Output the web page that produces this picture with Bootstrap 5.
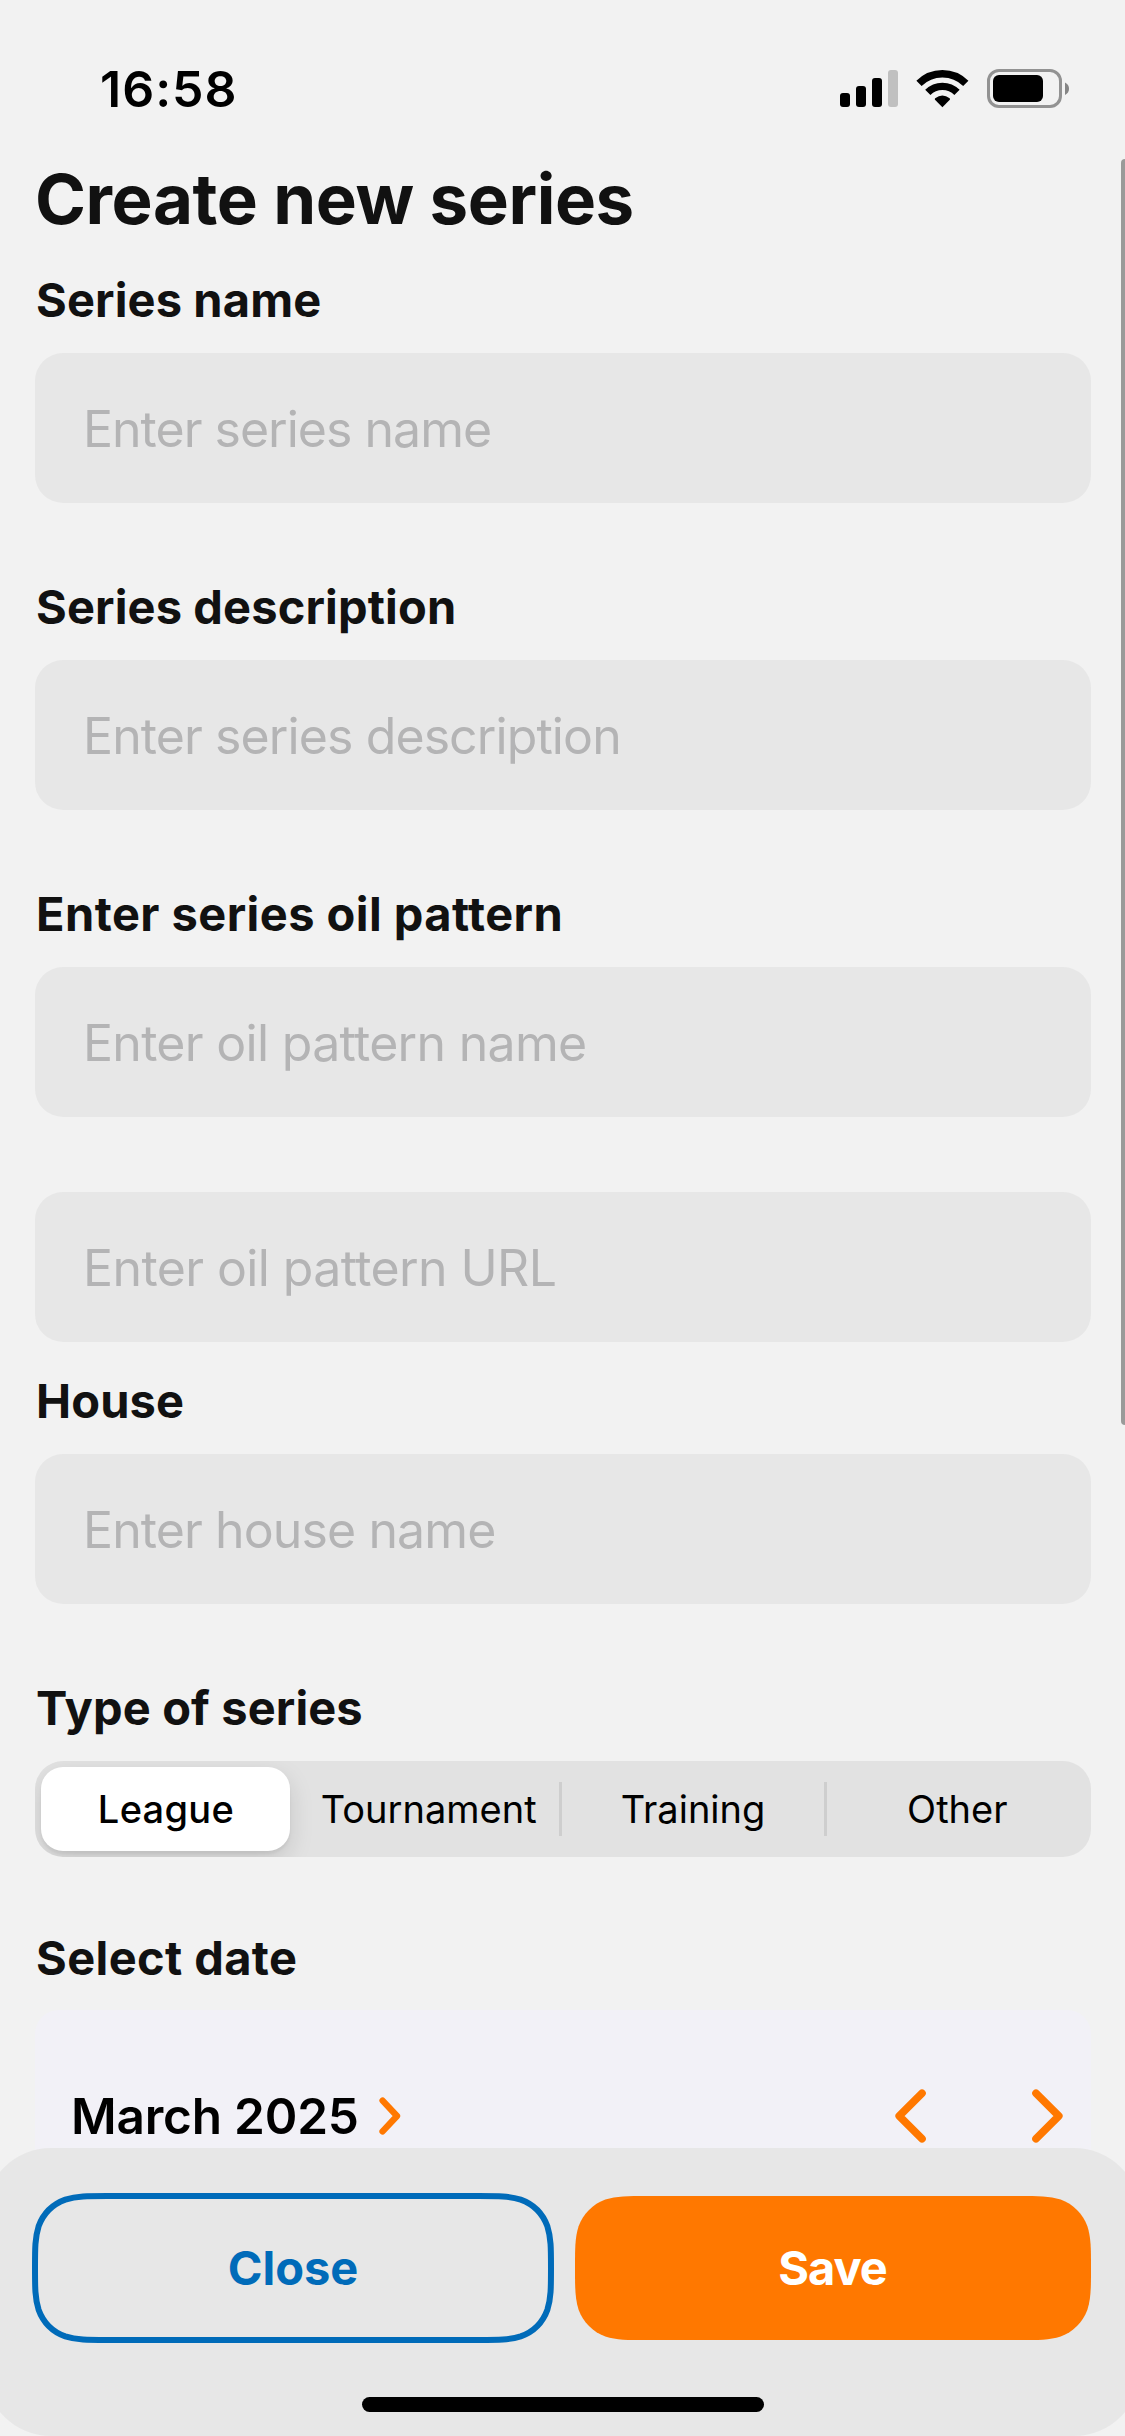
<!DOCTYPE html>
<html lang="en">
<head>
<meta charset="utf-8">
<meta name="viewport" content="width=device-width, initial-scale=1">
<title>Create new series</title>
<link href="https://cdn.jsdelivr.net/npm/bootstrap@5.3.0/dist/css/bootstrap.min.css" rel="stylesheet">
<style>
  body { font-family: Inter, "Liberation Sans", sans-serif; background: #f2f2f2; color: #111; }
  .screen { width: 1125px; height: 2436px; }
  .status-bar { height: 157px; padding: 0 56px 0 100px; color: #000; }
  .clock { font-size: 50px; line-height: 60px; letter-spacing: 1px; margin-top: 59px; }
  .status-icons { margin-top: 69px; width: 229px; height: 39px; }
  .form-area { padding: 0 34px 0 35px; }
  .page-title { font-size: 69px; line-height: 84px; letter-spacing: -.44px; margin-bottom: 30px; }
  .field-label { display: block; font-size: 47px; line-height: 58px; letter-spacing: .13px; margin: 0 0 24px; padding-left: 1px; }
  .label-wide { letter-spacing: .44px; }
  .label-date { letter-spacing: .38px; margin-bottom: 23px; }
  .field-input, .field-input:focus { height: 150px; border: 0; border-radius: 28px; background: #e7e7e7; font-size: 50px; line-height: 60px; padding: 2px 48px 0; }
  .field-input::placeholder { color: #b4b4b5; opacity: 1; }
  .ls-a { letter-spacing: -.99px; } .ls-e { letter-spacing: -.9px; } .ls-b { letter-spacing: -.7px; } .ls-c { letter-spacing: -.6px; } .ls-d { letter-spacing: -.9px; }
  .gap-field { margin-bottom: 75px; }
  .gap-tight { margin-bottom: 30px; }
  .segmented { height: 96px; border-radius: 28px; background: #e2e2e2; margin-bottom: 72px; overflow: hidden; }
  .segment { height: 54px; border: 0; border-right: 3px solid #cecece; border-radius: 0; background: none; padding: 0; font-size: 38px; line-height: 54px; color: #000; }
  .segment:last-child { border-right: 3px solid transparent; }
  .segment.chosen { flex: 0 0 249px; height: 84px; line-height: 84px; margin: 0 8px 0 6px; padding-left: 1px; border: 0; border-radius: 22px; background: #fff; box-shadow: 0 9px 24px rgba(0,0,0,.13), 0 3px 3px rgba(0,0,0,.05); letter-spacing: .3px; }
  .calendar { height: 400px; border-radius: 24px; background: #f2f1f7; padding: 74px 28px 0 36px; color: #000; }
  .month { font-size: 49.5px; line-height: 64px; letter-spacing: -.2px; }
  .month-arrow { margin-left: 20px; }
  .next-arrow { margin-left: 106px; }
  .chevron { fill: none; stroke: #ff7800; stroke-linecap: round; stroke-linejoin: round; }
  .scroll-thumb { right: 0; top: 159px; width: 4px; height: 1266px; border-radius: 4px 0 0 4px; background: #9a9a99; }
  .sheet { left: -15px; right: -15px; bottom: 0; height: 288px; border-radius: 66px; background: #e7e7e7; padding: 45px 46px 0 47px; }
  .action { position: relative; width: 522px; height: 150px; border: 0; padding: 0; font-size: 47px; line-height: 150px; background: none; }
  .action svg { position: absolute; left: 0; top: 0; }
  .action span { position: relative; }
  .act-close { color: #006bb9; }
  .act-save { color: #fff; letter-spacing: -1px; padding-right: 1px; }
  .home-bar { width: 402px; height: 15px; border-radius: 8px; background: #000; margin: 54px auto 0; }
</style>
</head>
<body>
<svg width="0" height="0" class="position-absolute">
  <symbol id="pill" overflow="visible">
    <path d="M72 0H444C463.75 0 474.32 0 485.69 3.6C498.1 8.11 507.89 17.9 512.4 30.31C516 41.68 516 52.25 516 72C516 91.75 516 102.32 512.4 113.69C507.89 126.1 498.1 135.89 485.69 140.4C474.32 144 463.75 144 444 144H72C52.25 144 41.68 144 30.31 140.4C17.9 135.89 8.11 126.1 3.6 113.69C0 102.32 0 91.75 0 72C0 52.25 0 41.68 3.6 30.31C8.11 17.9 17.9 8.11 30.31 3.6C41.68 0 52.25 0 72 0Z"/>
  </symbol>
</svg>

<div class="screen position-relative overflow-hidden">
  <header class="status-bar d-flex justify-content-between align-items-start">
    <span class="clock fw-semibold">16:58</span>
    <svg class="status-icons" viewBox="840 69 229 39">
      <rect x="840" y="93" width="10" height="14" rx="3"/>
      <rect x="856" y="86" width="10" height="21" rx="3"/>
      <rect x="872" y="78" width="10" height="29" rx="3"/>
      <rect x="888" y="70" width="10" height="37" rx="3" fill="#c0c0c0"/>
      <g fill="none" stroke="#000" stroke-width="7.4">
        <path d="M919 83.4A33.2 33.2 0 0 1 965.8 83.4"/>
        <path d="M927.8 92.4A20.6 20.6 0 0 1 957 92.4"/>
      </g>
      <path d="M942.4 107.2L935 99.8Q934.4 99 935.2 98.2Q942.4 92.6 949.6 98.2Q950.4 99 949.8 99.8Z"/>
      <rect x="988.5" y="70.5" width="72" height="36" rx="10.5" fill="none" stroke="#929292" stroke-width="3"/>
      <rect x="993" y="75" width="50" height="27" rx="6"/>
      <path d="M1065 82.5Q1069 84.5 1069 88.7T1065 95Z" fill="#858585"/>
    </svg>
  </header>

  <main class="form-area">
    <h1 class="page-title fw-bold">Create new series</h1>

    <label class="field-label fw-bold" for="seriesName">Series name</label>
    <input class="form-control field-input ls-a gap-field" id="seriesName" placeholder="Enter series name">

    <label class="field-label fw-bold" for="seriesDesc">Series description</label>
    <input class="form-control field-input ls-e gap-field" id="seriesDesc" placeholder="Enter series description">

    <label class="field-label label-wide fw-bold" for="oilName">Enter series oil pattern</label>
    <input class="form-control field-input ls-b gap-field" id="oilName" placeholder="Enter oil pattern name">
    <input class="form-control field-input ls-c gap-tight" id="oilUrl" placeholder="Enter oil pattern URL">

    <label class="field-label fw-bold" for="house">House</label>
    <input class="form-control field-input ls-d gap-field" id="house" placeholder="Enter house name">

    <span class="field-label fw-bold">Type of series</span>
    <div class="segmented d-flex align-items-center">
      <button class="btn segment chosen fw-medium">League</button>
      <button class="btn segment w-100">Tournament</button>
      <button class="btn segment w-100">Training</button>
      <button class="btn segment w-100">Other</button>
    </div>

    <span class="field-label label-date fw-bold">Select date</span>
    <section class="calendar">
      <div class="d-flex align-items-center">
        <span class="month fw-semibold">March 2025</span>
        <svg class="chevron month-arrow me-auto" width="22" height="38" viewBox="0 0 22 38" stroke-width="6.4"><path d="M3.6 3.6L18 19 3.6 34.4"/></svg>
        <svg class="chevron" width="31" height="54" viewBox="0 0 31 54" stroke-width="7.6"><path d="M27 4.2L4.2 27 27 49.8"/></svg>
        <svg class="chevron next-arrow" width="31" height="54" viewBox="0 0 31 54" stroke-width="7.6"><path d="M4 4.2L26.8 27 4 49.8"/></svg>
      </div>
    </section>
  </main>

  <div class="scroll-thumb position-absolute"></div>

  <footer class="sheet position-absolute">
    <div class="d-flex justify-content-between">
      <button class="btn action act-close fw-bold"><svg width="522" height="150" viewBox="-3 -3 522 150" fill="none" stroke="#006bb9" stroke-width="6"><use href="#pill"/></svg><span>Close</span></button>
      <button class="btn action act-save fw-bold"><svg width="522" height="150" viewBox="-3 -3 522 150" fill="#ff7800"><use href="#pill"/></svg><span>Save</span></button>
    </div>
    <div class="home-bar"></div>
  </footer>
</div>
<script src="https://cdn.jsdelivr.net/npm/bootstrap@5.3.0/dist/js/bootstrap.bundle.min.js"></script>
</body>
</html>
